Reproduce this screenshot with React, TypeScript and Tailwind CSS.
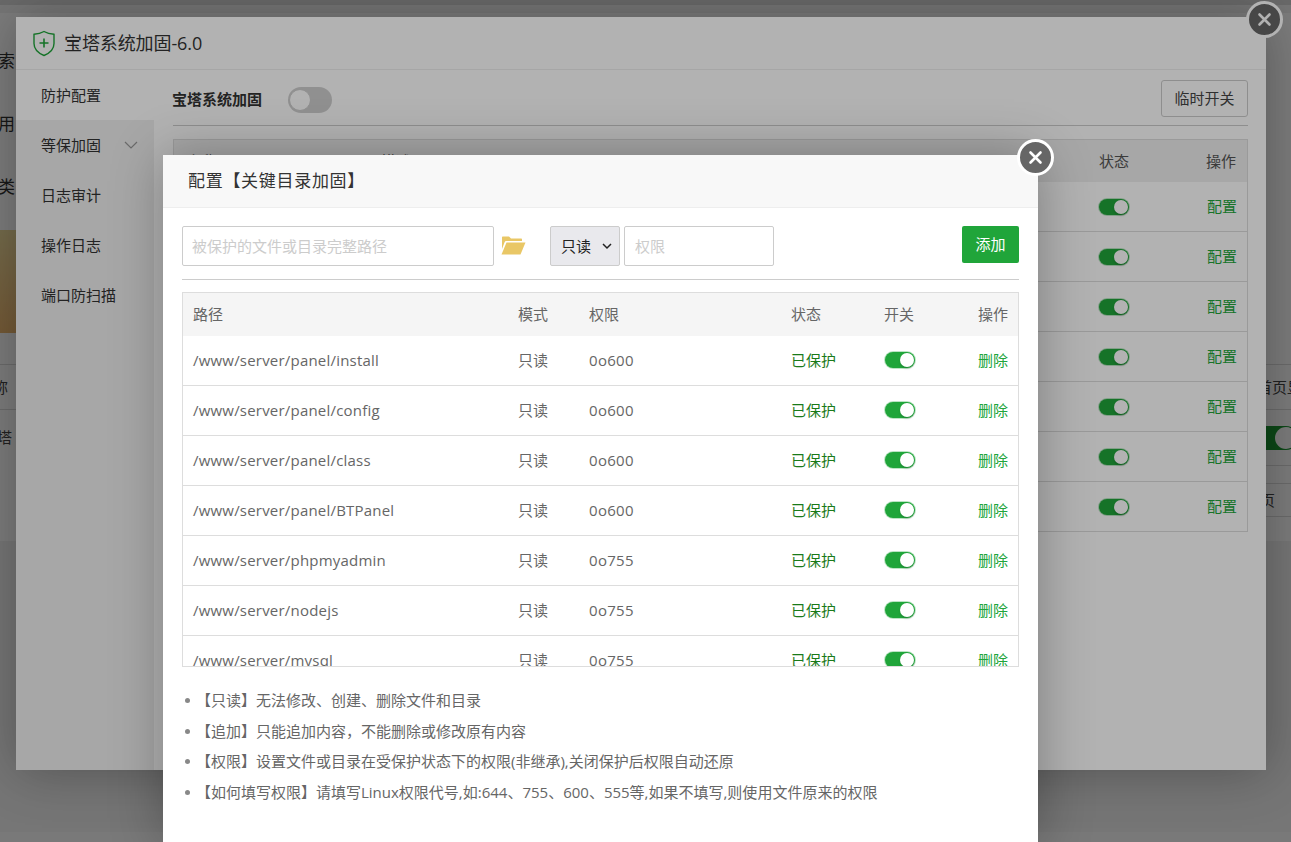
const font = "font-['Open_Sans','Noto_Sans_CJK_SC',sans-serif]";

const navItems = ["防护配置", "等保加固", "日志审计", "操作日志", "端口防扫描"];

const paths = [
  { path: "/www/server/panel/install", perm: "0o600" },
  { path: "/www/server/panel/config", perm: "0o600" },
  { path: "/www/server/panel/class", perm: "0o600" },
  { path: "/www/server/panel/BTPanel", perm: "0o600" },
  { path: "/www/server/phpmyadmin", perm: "0o755" },
  { path: "/www/server/nodejs", perm: "0o755" },
  { path: "/www/server/mysql", perm: "0o755" },
];

const notes = [
  "【只读】无法修改、创建、删除文件和目录",
  "【追加】只能追加内容，不能删除或修改原有内容",
  "【权限】设置文件或目录在受保护状态下的权限(非继承),关闭保护后权限自动还原",
  "【如何填写权限】请填写Linux权限代号,如:644、755、600、555等,如果不填写,则使用文件原来的权限",
];

function Toggle() {
  return (
    <div className="flex h-[16px] w-[30px] items-center justify-end rounded-full bg-[#20a53a] pr-[1px] ring-1 ring-[#20a53a]/30">
      <div className="h-[14px] w-[14px] rounded-full bg-white shadow-[0_2px_2px_rgba(0,0,0,0.15)]" />
    </div>
  );
}

function CloseButton({ className }: { className: string }) {
  return (
    <div className={`absolute flex h-[37px] w-[37px] items-center justify-center rounded-full border-[3px] border-white bg-[#666] ${className}`}>
      <svg width="15" height="15" viewBox="0 0 15 15" fill="none" stroke="white" strokeWidth="2.6" strokeLinecap="round">
        <path d="M2.5 2.5l10 10M12.5 2.5l-10 10" />
      </svg>
    </div>
  );
}

function BackgroundPage() {
  return (
    <div className="flex h-full flex-col bg-[#f3f3f3]">
      <div className="h-[5px] bg-[#d8d8d8]" />
      <div className="flex-1 pt-[8px]">
        <div className="flex h-[528px] flex-col bg-white">
          <div className="-ml-[2px] flex h-[217px] flex-col gap-[42px] pt-[37px] text-[17px] leading-[21px] text-[#333]">
            <span>索</span>
            <span>用</span>
            <span>类</span>
          </div>
          <div className="h-[103px] w-[200px] bg-gradient-to-b from-[#efdc9c] to-[#eeb870]" />
          <div className="h-[31px]" />
          <div className="flex h-[45px] items-center justify-between border-t border-[#ddd] text-[15px] text-[#444]">
            <span className="-ml-[7px]">称</span>
            <span className="-mr-[26px]">首页显示</span>
          </div>
          <div className="flex h-[56px] items-center justify-between border-t border-[#ddd] text-[15px] text-[#444]">
            <span className="-ml-[3px]">塔</span>
            <div className="-mr-[7px] flex h-[24px] w-[44px] items-center justify-end rounded-full bg-[#1a9632] pr-[1px]">
              <div className="h-[22px] w-[22px] rounded-full bg-white" />
            </div>
          </div>
          <div className="ml-[1200px] h-[18px] border-t border-[#ddd]" />
          <div className="ml-[1200px] flex h-[34px] items-center justify-end border-y border-[#ddd] pr-[16px] text-[15px] text-[#444]">
            <span>页</span>
          </div>
        </div>
      </div>
      <div className="h-[10px] bg-[#fafafa]" />
    </div>
  );
}

function OuterModal() {
  return (
    <div className="absolute left-[16px] top-[17px] flex h-[753px] w-[1250px] flex-col bg-white shadow-[1px_1px_50px_rgba(0,0,0,0.3)]">
      <div className="flex h-[53px] items-center gap-[8px] border-b border-[#eee] pl-[16px] text-[18px] text-[#333]">
        <svg width="24" height="27" viewBox="0 0 24 27" fill="none" stroke="#20a53a" strokeWidth="1.4">
          <path d="M12 1.5c3 1.8 6.5 2.6 10 2.8v9.2c0 5.5-4 9.5-10 12-6-2.5-10-6.500-10-12V4.300c3.500-.2 7-1 10-2.800z" />
          <path d="M12 8.500v9M7.500 13h9" strokeWidth="1.600" />
        </svg>
        <span className="tracking-[-0.1px]">宝塔系统加固-6.0</span>
      </div>
      <div className="flex flex-1">
        <div className="flex w-[138px] flex-col bg-[#f0f0f0] text-[15px] text-[#333]">
          {navItems.map((item, i) => (
            <div key={item} className={`flex h-[50px] items-center justify-between pl-[25px] pr-[16px] ${i === 0 ? "bg-white" : ""}`}>
              <span>{item}</span>
              {i === 1 && (
                <svg width="14" height="8" viewBox="0 0 14 8" fill="none" stroke="#999" strokeWidth="1.200">
                  <path d="M1 1l6 6 6-6" />
                </svg>
              )}
            </div>
          ))}
        </div>
        <div className="flex-1 pl-[19px] pr-[18px] pt-[10px]">
          <div className="flex h-[46px] items-start justify-between border-b border-[#ccc]">
            <div className="flex items-center gap-[26px] pt-[7px]">
              <span className="-ml-[1px] -mt-[2px] text-[15px] font-bold text-[#333]">宝塔系统加固</span>
              <div className="flex h-[26px] w-[44px] items-center rounded-full bg-[#cfcfcf] pl-[1px]">
                <div className="h-[22px] w-[22px] rounded-full border border-[#ccc] bg-white" />
              </div>
            </div>
            <div className="flex h-[37px] w-[87px] items-center justify-center rounded-[3px] border border-[#ccc] text-[15px] text-[#444]">临时开关</div>
          </div>
          <div className="mt-[13px] border border-t-[#ddd] border-r-[#ddd] border-b-0 border-l-[#ddd]">
            <div className="flex h-[42px] items-center bg-[#efefef] text-[15px] text-[#555]">
              <span className="w-[207px] pl-[13px]">名称</span>
              <span className="w-[718px]">描述</span>
              <span className="w-[107px]">状态</span>
              <span className="w-[30px]">操作</span>
            </div>
            {[0, 1, 2, 3, 4, 5, 6].map((i) => (
              <div key={i} className="flex h-[50px] items-center justify-end border-b border-[#ddd] pr-[10px]">
                <Toggle />
                <span className="ml-[78px] text-[15px] text-[#20a53a]">配置</span>
              </div>
            ))}
          </div>
        </div>
      </div>
      <CloseButton className="-right-[17px] -top-[16px]" />
    </div>
  );
}

function InnerModal() {
  return (
    <div className="absolute bottom-0 left-[163px] top-[155px] flex w-[875px] flex-col bg-white shadow-[1px_1px_50px_rgba(0,0,0,0.3)]">
      <div className="flex h-[53px] items-center border-b border-[#eee] bg-[#f8f8f8] pl-[25px] text-[17px] tracking-[0.7px] text-[#333]">
        配置【关键目录加固】
      </div>
      <div className="flex flex-col px-[19px] pt-[18px]">
        <div className="flex h-[54px] items-start border-b border-[#ccc]">
          <input
            placeholder="被保护的文件或目录完整路径"
            className="h-[40px] w-[312px] rounded-[2px] border border-[#ccc] px-[9px] text-[15px] outline-none placeholder:text-[#ccc]"
          />
          <svg className="ml-[6px] mt-[10px]" width="26" height="19" viewBox="0 0 26 19" fill="#e9c766">
            <path d="M2 1.500c0-.6.400-1 1-1h6l2 2h10c.6 0 1 .400 1 1V5H6.500c-.9 0-1.600.500-1.900 1.300L2 13V1.500z" />
            <path d="M6.500 6.500H25.500L20.500 18.500H1.500L6.500 6.500z" />
          </svg>
          <div className="relative ml-[24px]">
            <select className="h-[40px] w-[70px] appearance-none rounded-[2px] border border-[#ccc] bg-[#e9e9ed] pl-[10px] text-[15px] text-[#222]">
              <option>只读</option>
            </select>
            <svg className="pointer-events-none absolute right-[8px] top-[17px]" width="10" height="7" viewBox="0 0 10 7" fill="none" stroke="#222" strokeWidth="1.500">
              <path d="M1 1l4 4 4-4" />
            </svg>
          </div>
          <input
            placeholder="权限"
            className="ml-[4px] h-[40px] w-[150px] rounded-[2px] border border-[#ccc] px-[10px] text-[15px] outline-none placeholder:text-[#ccc]"
          />
          <button className="ml-auto h-[37px] w-[57px] rounded-[2px] bg-[#20a53a] text-[15px] text-white">添加</button>
        </div>
        <div className="mt-[12px] h-[375px] overflow-hidden border border-[#ddd] text-[15px] text-[#666]">
          <div className="flex h-[43px] items-center bg-[#f5f5f5]">
            <span className="w-[335px] pl-[10px]">路径</span>
            <span className="w-[71px]">模式</span>
            <span className="w-[202px]">权限</span>
            <span className="w-[93px]">状态</span>
            <span className="w-[94px]">开关</span>
            <span>操作</span>
          </div>
          {paths.map((row) => (
            <div key={row.path} className="flex h-[50px] flex-none items-center border-b border-[#ddd]">
              <span className="w-[335px] pl-[10px] tracking-[0.2px]">{row.path}</span>
              <span className="w-[71px]">只读</span>
              <span className="w-[202px] tracking-[0.3px]">{row.perm}</span>
              <span className="w-[93px] text-[#1a7a1a]">已保护</span>
              <span className="-mt-[1px] w-[94px] pl-[1px]"><Toggle /></span>
              <span className="text-[#20a53a]">删除</span>
            </div>
          ))}
        </div>
        <ul className="mt-[23px] flex flex-col gap-[9.500px] text-[14px] text-[#666]">
          {notes.map((note) => (
            <li key={note} className="flex h-[21px] items-center">
              <span className="ml-[3px] mr-[6px] h-[5px] w-[5px] rounded-full bg-[#888]" />
              <span className="text-[15px]">{note}</span>
            </li>
          ))}
        </ul>
      </div>
      <CloseButton className="-right-[16px] -top-[16px]" />
    </div>
  );
}

export default function App() {
  return (
    <div className={`relative h-[842px] w-[1291px] overflow-hidden ${font}`}>
      <BackgroundPage />
      <div className="absolute inset-0 bg-black/30" />
      <OuterModal />
      <div className="absolute inset-0 bg-black/30" />
      <InnerModal />
    </div>
  );
}
